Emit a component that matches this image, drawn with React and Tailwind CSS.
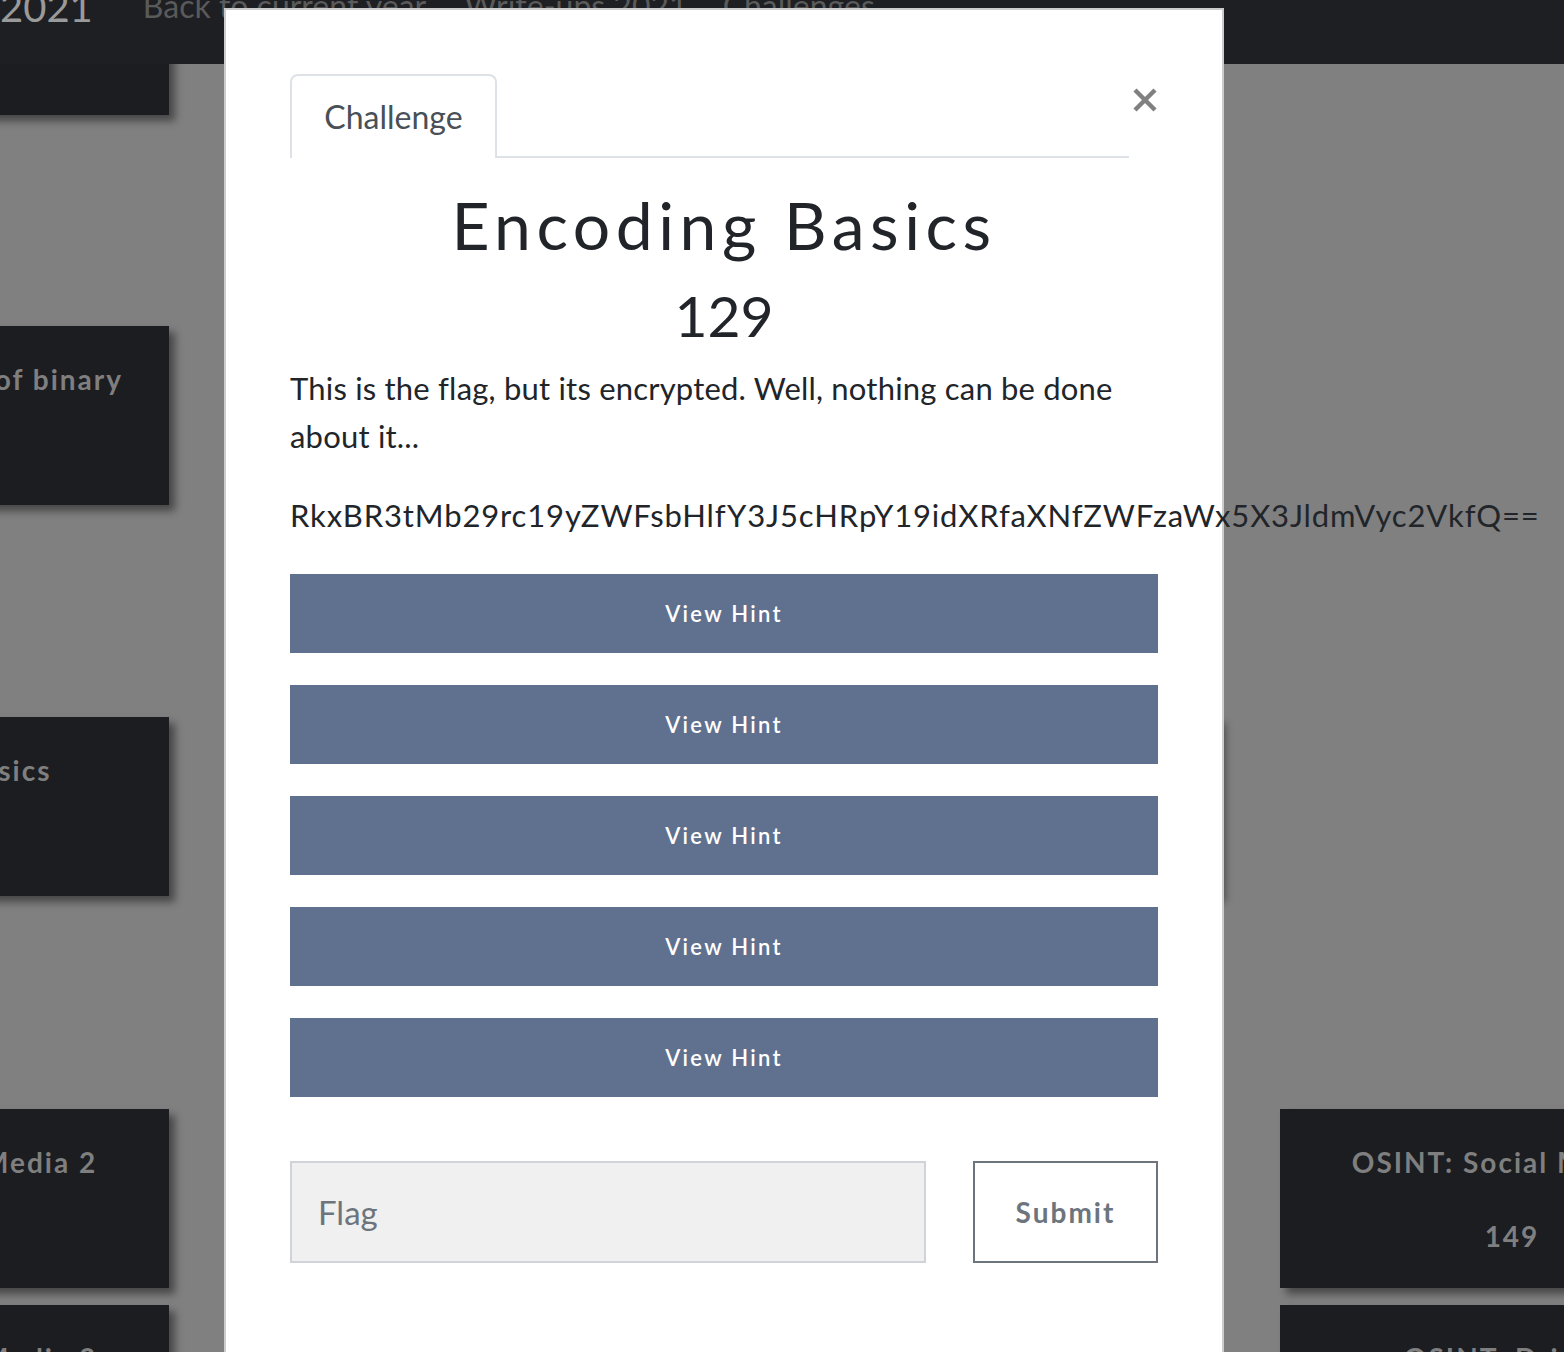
import React from 'react';

const ROWS = [
  { mt: '-mt-[64px]', cards: ['The magic world of binary', 'Hex dump', null, null] },
  { mt: 'mt-[211px]', cards: ['The magic world of binary', 'Caesar', null, null] },
  { mt: 'mt-[212px]', cards: ['Encoding Basics', 'Substitution', 'XOR Basics', null] },
  { mt: 'mt-[213px]', cards: ['OSINT: Social Media 2', 'OSINT: Social Media 3', null, 'OSINT: Social Media 1'] },
  { mt: 'mt-[17px]', cards: ['OSINT: Social Media 3', 'OSINT: Geo', null, 'OSINT: Driving'] },
];

const POINTS = ['100', '129', '149', '200'];

function Card({ title, points }) {
  if (!title) return <div className="w-[464px] h-[179px] shrink-0" />;
  return (
    <div className="w-[464px] h-[179px] shrink-0 bg-[#1c1d21] shadow-[6px_6px_8px_rgba(0,0,0,0.45)] flex flex-col items-center pt-[35px] text-[#7f7f7f] font-bold text-[28px] leading-[36px] tracking-[2px] whitespace-nowrap">
      <div>{title}</div>
      <div className="mt-[38px]">{points}</div>
    </div>
  );
}

function CloseIcon() {
  return (
    <svg width="24" height="24" viewBox="0 0 24 24" className="block">
      <path d="M2 2 L22 22 M22 2 L2 22" stroke="#808080" strokeWidth="4.5" />
    </svg>
  );
}

export default function App() {
  return (
    <div className="relative w-full h-[1352px] overflow-hidden bg-[#808080] font-[Lato,'Liberation_Sans',sans-serif]">
      {/* challenge board behind the overlay */}
      <div className="flex flex-col ml-[-295px]">
        {ROWS.map((row, i) => (
          <div key={i} className={`flex gap-[61px] ${row.mt}`}>
            {row.cards.map((c, j) => (
              <Card key={j} title={c} points={c === 'OSINT: Social Media 1' ? '149' : POINTS[(i + j) % 4]} />
            ))}
          </div>
        ))}
      </div>

      {/* navbar */}
      <div className="absolute top-0 left-0 right-0 h-[64px] bg-[#1e1f22] overflow-hidden">
        <div className="flex items-start -mt-[17px] whitespace-nowrap">
          <span className="text-[40px] leading-[48px] text-[#9a9a9a]">2021</span>
          <span className="ml-[50px] mt-[3px] text-[32px] leading-[40px] text-[#5a5a5a]">Back to current year</span>
          <span className="ml-[38px] mt-[3px] text-[32px] leading-[40px] text-[#5a5a5a]">Write-ups 2021</span>
          <span className="ml-[35px] mt-[3px] text-[32px] leading-[40px] text-[#5a5a5a]">Challenges</span>
        </div>
      </div>

      {/* modal */}
      <div className="absolute left-[224px] top-[8px] w-[1000px] h-[1420px] bg-white border-2 border-black/20 px-[64px] pt-[64px] text-[#212529]">
        <div className="flex items-start">
          <div className="flex w-[840px] border-b-2 border-[#dee2e6]">
            <div className="w-[207px] h-[84px] -mb-[2px] bg-white border-2 border-b-0 border-[#dee2e6] rounded-t-[8px] flex items-center justify-center text-[32px] text-[#495057]">
              Challenge
            </div>
          </div>
          <button className="ml-[3px] mt-[13px] w-[26px] h-[26px] flex items-center justify-center">
            <CloseIcon />
          </button>
        </div>

        <h2 className="mt-[27px] text-center text-[66px] leading-[79px] tracking-[5.5px] font-normal">Encoding Basics</h2>
        <div className="mt-[17px] text-center text-[57px] leading-[68px]">129</div>

        <p className="mt-[15px] text-[31px] leading-[48px] tracking-[0.2px]">
          This is the flag, but its encrypted. Well, nothing can be done about it...
        </p>
        <p className="mt-[31px] text-[31px] leading-[48px] tracking-[0.85px] whitespace-nowrap">
          RkxBR3tMb29rc19yZWFsbHlfY3J5cHRpY19idXRfaXNfZWFzaWx5X3JldmVyc2VkfQ==
        </p>

        <div className="mt-[35px] flex flex-col gap-[32px]">
          {[0, 1, 2, 3, 4].map((n) => (
            <button
              key={n}
              className="w-full h-[79px] bg-[#60718f] text-white text-[22px] font-semibold tracking-[2.3px]"
            >
              View Hint
            </button>
          ))}
        </div>

        <div className="mt-[64px] flex justify-between">
          <input
            placeholder="Flag"
            className="w-[636px] h-[102px] bg-[#f0f0f0] border-2 border-[#ced4da] pl-[26px] text-[33px] placeholder:text-[#6c757d] outline-none"
          />
          <button className="w-[185px] h-[102px] bg-white border-2 border-[#6c757d] text-[#6c757d] text-[28px] font-bold tracking-[2px]">
            Submit
          </button>
        </div>
      </div>
    </div>
  );
}
